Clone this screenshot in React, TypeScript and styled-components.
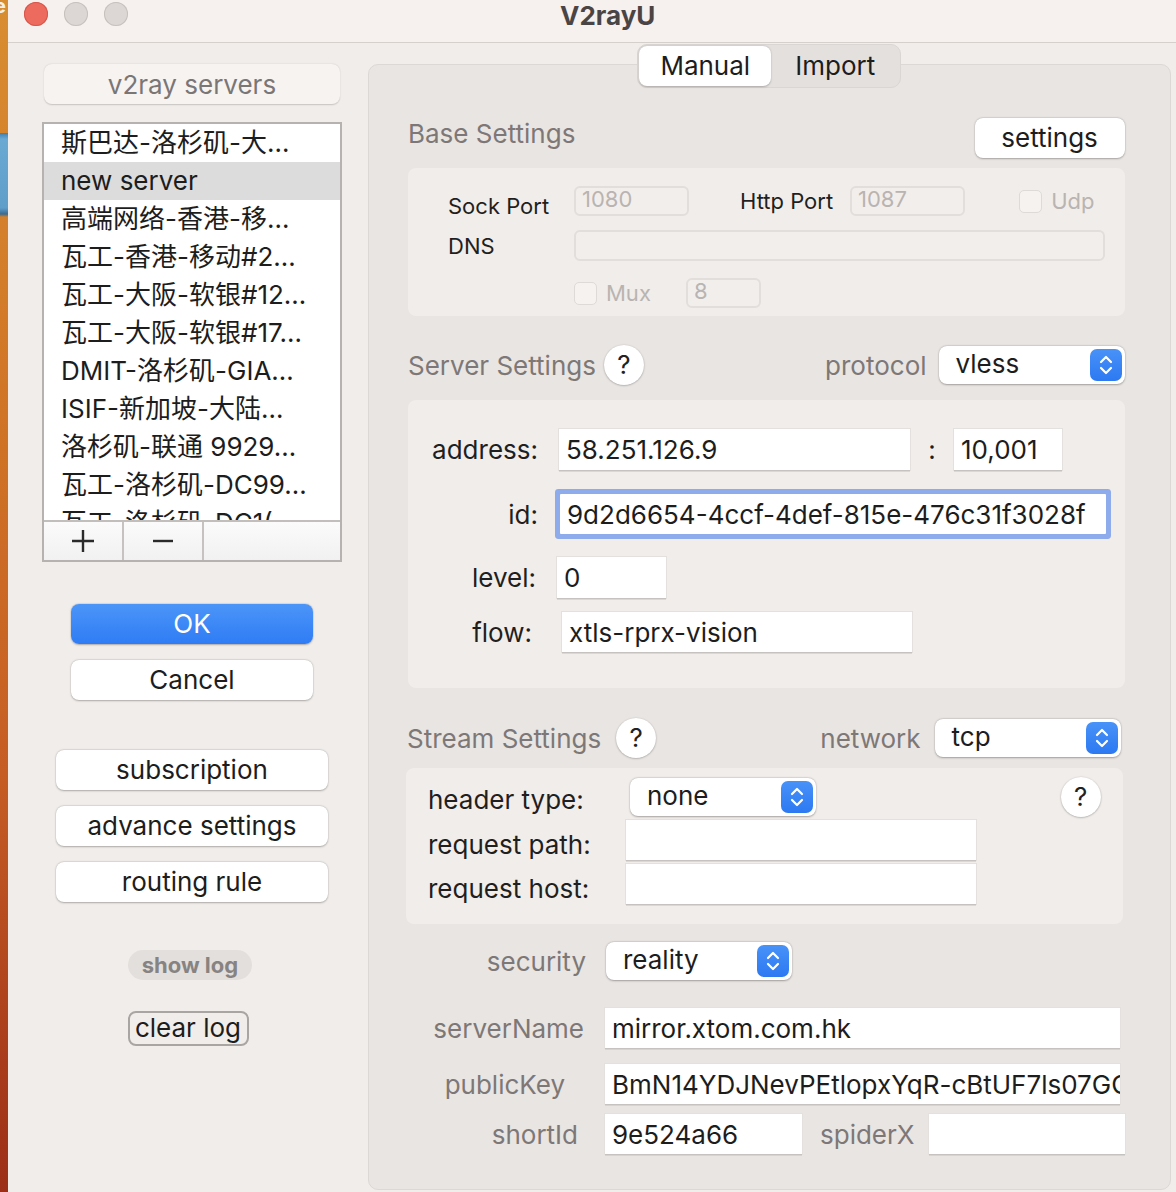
import React from "react";
import styled, { createGlobalStyle } from "styled-components";

const FONT = `"Inter", "Noto Sans CJK SC", "Noto Sans", sans-serif`;

const Global = createGlobalStyle`
  html, body { margin: 0; padding: 0; background: #f1edea; }
  body { font-family: ${FONT}; -webkit-font-smoothing: antialiased; }
  * { box-sizing: border-box; }
  #root { width: 1176px; height: 1192px; overflow: hidden; }
`;

const Screen = styled.div`
  display: flex;
  width: 1176px;
  height: 1192px;
  overflow: hidden;
`;

const Desktop = styled.div`
  width: 8px;
  flex: none;
  position: relative;
  overflow: hidden;
  background:
    linear-gradient(180deg, transparent 0 133px, #3f7fae 133px, #6aa9d2 139px, #5e9ec9 208px, #3a6b8f 214px, transparent 217px),
    linear-gradient(180deg, #d98d31 0%, #d07426 35%, #c65d24 65%, #9c2e17 100%);
`;

const DesktopGlyph = styled.span`
  position: absolute;
  left: -6px;
  top: -4px;
  font: 700 20px/20px ${FONT};
  color: #f4efe9;
`;

const Window = styled.div`
  flex: 1;
  display: flex;
  flex-direction: column;
  background: #f1edea;
`;

const TitleBar = styled.header`
  height: 43px;
  flex: none;
  display: flex;
  align-items: flex-start;
  padding: 2px 0 0 16px;
  background: #f6f0ee;
  border-bottom: 1px solid #d6d0cd;
`;

const Lights = styled.div`
  display: flex;
  gap: 16px;
`;

const Light = styled.span<{ $color: string; $ring: string }>`
  width: 24px;
  height: 24px;
  border-radius: 50%;
  background: ${(p) => p.$color};
  box-shadow: inset 0 0 0 1px ${(p) => p.$ring};
`;

const Title = styled.h1`
  margin: -1px 0 0 432px;
  font: 700 26px/30px ${FONT};
  color: #4a4544;
`;

const Body = styled.div`
  flex: 1;
  display: flex;
  min-height: 0;
`;

const Sidebar = styled.aside`
  width: 360px;
  flex: none;
  display: flex;
  flex-direction: column;
  align-items: center;
  padding: 21px 0 0 8px;
`;

const ServersCaption = styled.div`
  width: 296px;
  height: 40px;
  border-radius: 8px;
  background: #f6f3f1;
  box-shadow: 0 0.5px 1.5px rgba(0, 0, 0, 0.18);
  font-size: 26px;
  line-height: 42px;
  text-align: center;
  color: #7a7676;
`;

const ServerList = styled.div`
  width: 300px;
  height: 440px;
  margin-top: 18px;
  border: 2px solid #b6b2af;
  background: #fff;
  display: flex;
  flex-direction: column;
`;

const ListBody = styled.div`
  flex: 1;
  overflow: hidden;
`;

const ListRow = styled.div<{ $selected?: boolean }>`
  height: 38px;
  padding-left: 17px;
  font-size: 26px;
  line-height: 38px;
  white-space: nowrap;
  color: #1d1d1d;
  background: ${(p) => (p.$selected ? "#dcdcdc" : "transparent")};
`;

const ListFooter = styled.div`
  height: 40px;
  flex: none;
  display: flex;
  border-top: 2px solid #c2bebb;
  background: linear-gradient(180deg, #fbfbfb, #f1f1f1);
`;

const ToolButton = styled.div`
  width: 80px;
  height: 100%;
  display: flex;
  align-items: center;
  justify-content: center;
  border-right: 2px solid #c6c2bf;
`;

const PushButton = styled.div<{ $w: number; $mt: number; $primary?: boolean }>`
  width: ${(p) => p.$w}px;
  height: 40px;
  flex: none;
  margin-top: ${(p) => p.$mt}px;
  border-radius: 8px;
  font-size: 26px;
  line-height: 40px;
  text-align: center;
  color: ${(p) => (p.$primary ? "#fff" : "#1d1d1d")};
  background: ${(p) => (p.$primary ? "linear-gradient(180deg, #4b95f8, #2f7cf5)" : "#fff")};
  box-shadow: 0 0.5px 2px rgba(0, 0, 0, 0.28), 0 0 0 0.5px rgba(0, 0, 0, 0.05);
`;

const PillButton = styled.div`
  width: 124px;
  height: 30px;
  margin: 48px 0 0 -4px;
  border-radius: 15px;
  background: #e3dfdc;
  font: 700 22px/30px ${FONT};
  text-align: center;
  color: #878382;
`;

const BorderedButton = styled.div`
  width: 121px;
  height: 35px;
  margin: 31px 0 0 -8px;
  border: 2px solid #a9a5a3;
  border-radius: 8px;
  font-size: 26px;
  line-height: 30px;
  text-align: center;
  color: #1d1d1d;
`;

const Main = styled.main`
  flex: 1;
  display: flex;
  flex-direction: column;
  padding: 1px 6px 0 0;
`;

const Segmented = styled.div`
  align-self: center;
  display: flex;
  padding: 1px;
  height: 44px;
  border-radius: 10px;
  background: #e4e0dd;
  border: 1px solid #dad6d3;
  position: relative;
  z-index: 1;
`;

const Segment = styled.div<{ $active?: boolean; $w: number }>`
  width: ${(p) => p.$w}px;
  height: 40px;
  border-radius: 8px;
  font-size: 26px;
  line-height: 40px;
  text-align: center;
  color: #1d1d1d;
  background: ${(p) => (p.$active ? "#fff" : "transparent")};
  box-shadow: ${(p) => (p.$active ? "0 0.5px 2px rgba(0,0,0,0.25)" : "none")};
`;

const Panel = styled.section`
  flex: 1;
  margin: -24px 0 2px;
  border: 1px solid #dcd8d5;
  border-radius: 10px;
  background: #e9e5e2;
  padding: 53px 45px 0 39px;
  display: flex;
  flex-direction: column;
`;

const SectionHeader = styled.div<{ $mt: number; $h: number; $ml?: number; $mr?: number }>`
  display: flex;
  align-items: center;
  margin: ${(p) => p.$mt}px ${(p) => p.$mr ?? 0}px 0 ${(p) => p.$ml ?? 0}px;
  height: ${(p) => p.$h}px;
`;

const SectionTitle = styled.span<{ $dy?: number }>`
  font-size: 26px;
  color: #7d7877;
  margin-top: ${(p) => (p.$dy ?? 0) * 2}px;
`;

const Spacer = styled.div`
  flex: 1;
`;

const MutedLabel = styled.span<{ $ml?: number }>`
  font-size: 26px;
  color: #7d7877;
  margin-left: ${(p) => p.$ml ?? 0}px;
`;

const Help = styled.div<{ $ml?: number }>`
  width: 40px;
  height: 40px;
  flex: none;
  margin-left: ${(p) => p.$ml ?? 0}px;
  border-radius: 50%;
  background: #fff;
  box-shadow: 0 0.5px 2px rgba(0, 0, 0, 0.35);
  font-size: 26px;
  line-height: 40px;
  text-align: center;
  color: #222;
`;

const SelectBox = styled.div<{ $ml?: number }>`
  width: 186px;
  height: 38px;
  flex: none;
  margin-left: ${(p) => p.$ml ?? 0}px;
  display: flex;
  align-items: center;
  justify-content: space-between;
  padding: 0 3px 0 17px;
  border-radius: 8px;
  background: #fff;
  box-shadow: 0 0.5px 2px rgba(0, 0, 0, 0.3), 0 0 0 0.5px rgba(0, 0, 0, 0.05);
  font-size: 26px;
  color: #1d1d1d;
`;

const SelectText = styled.span`
  margin-top: -3px;
`;

const Stepper = styled.span`
  width: 32px;
  height: 32px;
  border-radius: 7px;
  background: linear-gradient(180deg, #4892f8, #2c79f2);
  display: flex;
  align-items: center;
  justify-content: center;
`;

const Box = styled.div<{ $mt: number; $h: number; $pad: string; $shift?: number }>`
  margin: ${(p) => p.$mt}px ${(p) => p.$shift ?? 0}px 0 ${(p) => -(p.$shift ?? 0)}px;
  height: ${(p) => p.$h}px;
  flex: none;
  padding: ${(p) => p.$pad};
  border-radius: 8px;
  background: #f1edea;
  display: flex;
  flex-direction: column;
`;

const Row = styled.div<{ $mt?: number; $h: number; $ml?: number }>`
  display: flex;
  align-items: center;
  height: ${(p) => p.$h}px;
  margin-top: ${(p) => p.$mt ?? 0}px;
  margin-left: ${(p) => p.$ml ?? 0}px;
`;

const BaseLabel = styled.span<{ $w: number; $ml?: number; $dy?: number }>`
  width: ${(p) => p.$w}px;
  flex: none;
  margin-left: ${(p) => p.$ml ?? 0}px;
  margin-top: ${(p) => (p.$dy ?? 0) * 2}px;
  font-size: 22px;
  color: #1f1f1f;
`;

const DimInput = styled.input<{ $w?: number; $h: number }>`
  width: ${(p) => (p.$w ? `${p.$w}px` : "auto")};
  flex: ${(p) => (p.$w ? "none" : "1")};
  height: ${(p) => p.$h}px;
  border: 2px solid #e2dedb;
  border-radius: 6px;
  background: #f2eeec;
  padding: 0 0 4px 6px;
  font: 400 22px ${FONT};
  color: #b9b4b1;
  outline: none;
`;

const Check = styled.span`
  width: 23px;
  height: 23px;
  flex: none;
  border-radius: 5px;
  border: 1.5px solid #dedad7;
  background: #f5f2f0;
`;

const DimText = styled.span`
  margin-left: 9px;
  font-size: 22px;
  color: #b9b4b1;
`;

const CheckGroup = styled.div<{ $w?: number; $mr?: number }>`
  display: flex;
  align-items: center;
  width: ${(p) => (p.$w ? `${p.$w}px` : "auto")};
  margin-right: ${(p) => p.$mr ?? 0}px;
`;

const FieldLabel = styled.span<{ $w: number; $pr?: number; $muted?: boolean }>`
  width: ${(p) => p.$w}px;
  flex: none;
  text-align: right;
  padding-right: ${(p) => p.$pr ?? 0}px;
  font-size: 26px;
  color: ${(p) => (p.$muted ? "#7d7877" : "#1f1f1f")};
`;

const LeftLabel = styled.span<{ $w: number; $dy?: number }>`
  width: ${(p) => p.$w}px;
  flex: none;
  margin-top: ${(p) => (p.$dy ?? 0) * 2}px;
  font-size: 26px;
  color: #1f1f1f;
`;

const TextField = styled.input<{ $w: number; $h?: number; $ml?: number; $focus?: boolean }>`
  width: ${(p) => p.$w}px;
  height: ${(p) => p.$h ?? 40}px;
  flex: none;
  margin-left: ${(p) => p.$ml ?? 0}px;
  border: none;
  border-radius: ${(p) => (p.$focus ? "1px" : "0")};
  background: #fff;
  padding: 0 0 0 7px;
  font: 400 26px ${FONT};
  color: #1d1d1d;
  outline: none;
  box-shadow: ${(p) =>
    p.$focus
      ? "0 0 0 5px #8eabeb"
      : "0 1.5px 0 #c6c2c0, 0 0 0 1px #e4e0dd"};
`;

const Colon = styled.span`
  width: 44px;
  flex: none;
  text-align: center;
  font-size: 26px;
  color: #1f1f1f;
`;

const Chevrons = () => (
  <svg width="20" height="26" viewBox="0 0 20 26" fill="none">
    <path d="M5 10 L10 5 L15 10" stroke="#fff" strokeWidth="2.2" strokeLinecap="round" strokeLinejoin="round" />
    <path d="M5 16 L10 21 L15 16" stroke="#fff" strokeWidth="2.2" strokeLinecap="round" strokeLinejoin="round" />
  </svg>
);

const Select = ({ value, ml }: { value: string; ml?: number }) => (
  <SelectBox $ml={ml}>
    <SelectText>{value}</SelectText>
    <Stepper>
      <Chevrons />
    </Stepper>
  </SelectBox>
);

const servers = [
  "斯巴达-洛杉矶-大…",
  "new server",
  "高端网络-香港-移…",
  "瓦工-香港-移动#2…",
  "瓦工-大阪-软银#12…",
  "瓦工-大阪-软银#17…",
  "DMIT-洛杉矶-GIA…",
  "ISIF-新加坡-大陆…",
  "洛杉矶-联通 9929…",
  "瓦工-洛杉矶-DC99…",
  "瓦工-洛杉矶-DC1(…",
];

export default function App() {
  return (
    <>
      <Global />
      <Screen>
        <Desktop>
          <DesktopGlyph>e</DesktopGlyph>
        </Desktop>
        <Window>
          <TitleBar>
            <Lights>
              <Light $color="#ed6a5e" $ring="#d6574b" />
              <Light $color="#dcd7d4" $ring="#c7c1be" />
              <Light $color="#dcd7d4" $ring="#c7c1be" />
            </Lights>
            <Title>V2rayU</Title>
          </TitleBar>
          <Body>
            <Sidebar>
              <ServersCaption>v2ray servers</ServersCaption>
              <ServerList>
                <ListBody>
                  {servers.map((s, i) => (
                    <ListRow key={i} $selected={i === 1}>
                      {s}
                    </ListRow>
                  ))}
                </ListBody>
                <ListFooter>
                  <ToolButton>
                    <svg width="24" height="24" viewBox="0 0 24 24">
                      <path d="M12 1 V23 M1 12 H23" stroke="#2a2a2a" strokeWidth="2.4" />
                    </svg>
                  </ToolButton>
                  <ToolButton>
                    <svg width="20" height="24" viewBox="0 0 20 24">
                      <path d="M0 12 H20" stroke="#2a2a2a" strokeWidth="2.4" />
                    </svg>
                  </ToolButton>
                </ListFooter>
              </ServerList>
              <PushButton $w={242} $mt={42} $primary>
                OK
              </PushButton>
              <PushButton $w={242} $mt={16}>
                Cancel
              </PushButton>
              <PushButton $w={272} $mt={50}>
                subscription
              </PushButton>
              <PushButton $w={272} $mt={16}>
                advance settings
              </PushButton>
              <PushButton $w={272} $mt={16}>
                routing rule
              </PushButton>
              <PillButton>show log</PillButton>
              <BorderedButton>clear log</BorderedButton>
            </Sidebar>

            <Main>
              <Segmented>
                <Segment $active $w={132}>
                  Manual
                </Segment>
                <Segment $w={128}>Import</Segment>
              </Segmented>
              <Panel>
                <SectionHeader $mt={0} $h={40}>
                  <SectionTitle $dy={-5}>Base Settings</SectionTitle>
                  <Spacer />
                  <PushButton $w={150} $mt={0}>
                    settings
                  </PushButton>
                </SectionHeader>

                <Box $mt={10} $h={148} $pad="18px 20px 0 40px">
                  <Row $h={30}>
                    <BaseLabel $w={126} $dy={5}>
                      Sock Port
                    </BaseLabel>
                    <DimInput $w={115} $h={30} readOnly value="1080" />
                    <BaseLabel $w={110} $ml={51}>
                      Http Port
                    </BaseLabel>
                    <DimInput $w={115} $h={30} readOnly value="1087" />
                    <Spacer />
                    <CheckGroup $mr={10}>
                      <Check />
                      <DimText>Udp</DimText>
                    </CheckGroup>
                  </Row>
                  <Row $h={31} $mt={14}>
                    <BaseLabel $w={126}>DNS</BaseLabel>
                    <DimInput $h={31} readOnly value="" />
                  </Row>
                  <Row $h={30} $mt={17} $ml={126}>
                    <CheckGroup $w={112}>
                      <Check />
                      <DimText>Mux</DimText>
                    </CheckGroup>
                    <DimInput $w={75} $h={30} readOnly value="8" />
                  </Row>
                </Box>

                <SectionHeader $mt={28} $h={42}>
                  <SectionTitle>Server Settings</SectionTitle>
                  <Help $ml={8}>?</Help>
                  <Spacer />
                  <MutedLabel>protocol</MutedLabel>
                  <Select value="vless" ml={12} />
                </SectionHeader>

                <Box $mt={14} $h={288} $pad="29px 0 0 0">
                  <Row $h={41}>
                    <FieldLabel $w={130}>address:</FieldLabel>
                    <TextField $w={351} $h={41} $ml={21} readOnly value="58.251.126.9" />
                    <Colon>:</Colon>
                    <TextField $w={108} $h={41} readOnly value="10,001" />
                  </Row>
                  <Row $h={40} $mt={24}>
                    <FieldLabel $w={130}>id:</FieldLabel>
                    <TextField
                      $w={546}
                      $ml={22}
                      $focus
                      readOnly
                      value="9d2d6654-4ccf-4def-815e-476c31f3028f"
                    />
                  </Row>
                  <Row $h={41} $mt={23}>
                    <FieldLabel $w={128}>level:</FieldLabel>
                    <TextField $w={109} $h={41} $ml={21} readOnly value="0" />
                  </Row>
                  <Row $h={40} $mt={14}>
                    <FieldLabel $w={124}>flow:</FieldLabel>
                    <TextField $w={350} $ml={30} readOnly value="xtls-rprx-vision" />
                  </Row>
                </Box>

                <SectionHeader $mt={28} $h={44} $ml={-1} $mr={4}>
                  <SectionTitle>Stream Settings</SectionTitle>
                  <Help $ml={15}>?</Help>
                  <Spacer />
                  <MutedLabel>network</MutedLabel>
                  <Select value="tcp" ml={14} />
                </SectionHeader>

                <Box $mt={8} $h={156} $pad="10px 22px 0 22px" $shift={2}>
                  <Row $h={38}>
                    <LeftLabel $w={198} $dy={2}>
                      header type:
                    </LeftLabel>
                    <Select value="none" ml={4} />
                    <Spacer />
                    <Help>?</Help>
                  </Row>
                  <Row $h={40} $mt={4}>
                    <LeftLabel $w={198} $dy={4}>
                      request path:
                    </LeftLabel>
                    <TextField $w={350} readOnly value="" />
                  </Row>
                  <Row $h={40} $mt={4}>
                    <LeftLabel $w={198} $dy={4}>
                      request host:
                    </LeftLabel>
                    <TextField $w={350} readOnly value="" />
                  </Row>
                </Box>

                <Row $h={38} $mt={18}>
                  <FieldLabel $w={182} $pr={4} $muted>
                    security
                  </FieldLabel>
                  <Select value="reality" ml={16} />
                </Row>
                <Row $h={40} $mt={28}>
                  <FieldLabel $w={182} $pr={6} $muted>
                    serverName
                  </FieldLabel>
                  <TextField $w={515} $ml={15} readOnly value="mirror.xtom.com.hk" />
                </Row>
                <Row $h={40} $mt={16}>
                  <FieldLabel $w={182} $pr={25} $muted>
                    publicKey
                  </FieldLabel>
                  <TextField
                    $w={515}
                    $ml={15}
                    readOnly
                    value="BmN14YDJNevPEtlopxYqR-cBtUF7ls07GGsQ"
                  />
                </Row>
                <Row $h={40} $mt={10}>
                  <FieldLabel $w={182} $pr={12} $muted>
                    shortId
                  </FieldLabel>
                  <TextField $w={197} $ml={15} readOnly value="9e524a66" />
                  <MutedLabel $ml={18}>spiderX</MutedLabel>
                  <TextField $w={196} $ml={14} readOnly value="" />
                </Row>
              </Panel>
            </Main>
          </Body>
        </Window>
      </Screen>
    </>
  );
}
